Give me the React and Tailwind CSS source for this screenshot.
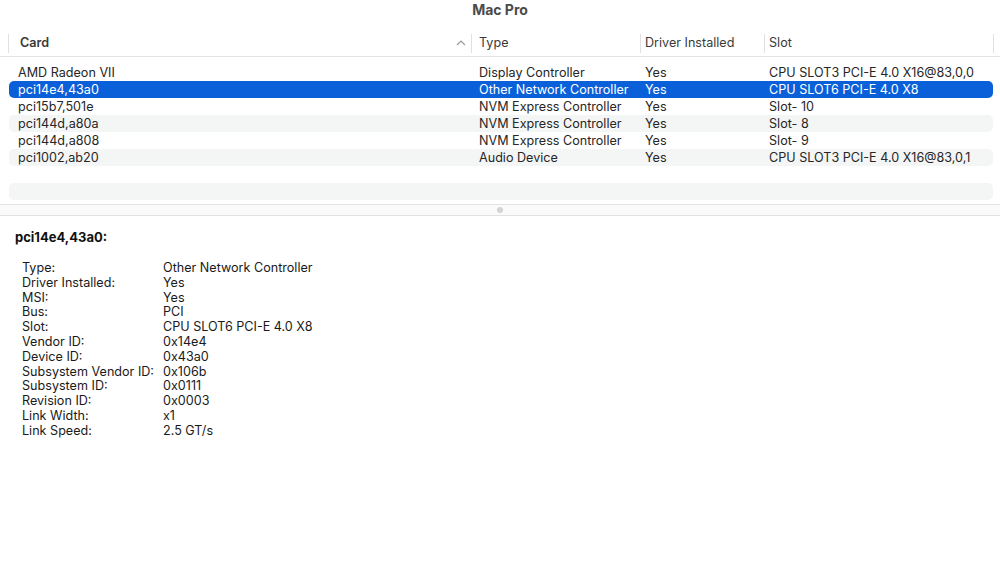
import React from 'react'

const rows = [
    { card: 'AMD Radeon VII', type: 'Display Controller', driver: 'Yes', slot: 'CPU SLOT3 PCI-E 4.0 X16@83,0,0' },
    { card: 'pci14e4,43a0', type: 'Other Network Controller', driver: 'Yes', slot: 'CPU SLOT6 PCI-E 4.0 X8', selected: true },
    { card: 'pci15b7,501e', type: 'NVM Express Controller', driver: 'Yes', slot: 'Slot- 10' },
    { card: 'pci144d,a80a', type: 'NVM Express Controller', driver: 'Yes', slot: 'Slot- 8' },
    { card: 'pci144d,a808', type: 'NVM Express Controller', driver: 'Yes', slot: 'Slot- 9' },
    { card: 'pci1002,ab20', type: 'Audio Device', driver: 'Yes', slot: 'CPU SLOT3 PCI-E 4.0 X16@83,0,1' },
    null,
    null,
]

const details = [
    ['Type:', 'Other Network Controller'],
    ['Driver Installed:', 'Yes'],
    ['MSI:', 'Yes'],
    ['Bus:', 'PCI'],
    ['Slot:', 'CPU SLOT6 PCI-E 4.0 X8'],
    ['Vendor ID:', '0x14e4'],
    ['Device ID:', '0x43a0'],
    ['Subsystem Vendor ID:', '0x106b'],
    ['Subsystem ID:', '0x0111'],
    ['Revision ID:', '0x0003'],
    ['Link Width:', 'x1'],
    ['Link Speed:', '2.5 GT/s'],
]

const App = () => {
    return (
        <div className="w-[1000px] h-[569px] bg-white overflow-hidden text-[#262626] font-['Inter','Liberation_Sans',sans-serif] text-[12.6px]">
            {/* title */}
            <div className="h-[30px] flex justify-center pt-[1px]">
                <span className="text-[14px] font-bold text-[#4b4b4b] leading-[18px]">Mac Pro</span>
            </div>

            {/* column header */}
            <div className="h-[27px] flex items-center border-b border-[#e3e3e3] text-[#3a3a3a]">
                <div className="w-[8px]" />
                <div className="w-[463px] h-[19px] border-l border-[#e0e0e0] flex items-center pl-[11px] pr-[4px]">
                    <span className="font-semibold flex-1">Card</span>
                    <svg width="10" height="6" viewBox="0 0 10 6" className="mr-[1px]">
                        <polyline points="1,5 5,1 9,5" fill="none" stroke="#9a9a9a" strokeWidth="1.2" />
                    </svg>
                </div>
                <div className="w-[169px] h-[19px] border-l border-[#e0e0e0] flex items-center pl-[7px]">Type</div>
                <div className="w-[124px] h-[19px] border-l border-[#e0e0e0] flex items-center pl-[4px]">Driver Installed</div>
                <div className="w-[229px] h-[19px] border-l border-[#e0e0e0] flex items-center pl-[4px]">Slot</div>
                <div className="h-[19px] border-l border-[#e0e0e0]" />
            </div>

            {/* rows */}
            <div className="pt-[7px] px-[9px] w-[1002px]">
                {rows.map((row, i) => (
                    <div
                        key={i}
                        className={`h-[17px] w-[984px] rounded-[5px] flex items-center leading-[17px] ${
                            row && row.selected ? 'bg-[#0a60d9] text-white' : i % 2 === 1 ? 'bg-[#f4f5f5]' : ''
                        }`}
                    >
                        {row && (
                            <>
                                <div className="w-[470px] pl-[9px] whitespace-nowrap">{row.card}</div>
                                <div className="w-[166px] whitespace-nowrap">{row.type}</div>
                                <div className="w-[124px] whitespace-nowrap">{row.driver}</div>
                                <div className="flex-1 whitespace-nowrap">{row.slot}</div>
                            </>
                        )}
                    </div>
                ))}
            </div>

            {/* split handle */}
            <div className="mt-[4px] h-[12px] border-y border-[#e2e2e2] bg-[#fafafa] flex items-center justify-center">
                <div className="w-[6px] h-[6px] rounded-full bg-[#d4d4d4]" />
            </div>

            {/* details */}
            <div className="pl-[15px] pt-[13px]">
                <div className="font-bold text-[13px] leading-[16px] text-[#111]">pci14e4,43a0:</div>
                <div className="ml-[7px] mt-[16px] grid grid-cols-[141px_1fr] text-[#1a1a1a] leading-[14.8px]">
                    {details.map(([label, value]) => (
                        <React.Fragment key={label}>
                            <div className="whitespace-nowrap">{label}</div>
                            <div className="whitespace-nowrap">{value}</div>
                        </React.Fragment>
                    ))}
                </div>
            </div>
        </div>
    )
}

export default App
